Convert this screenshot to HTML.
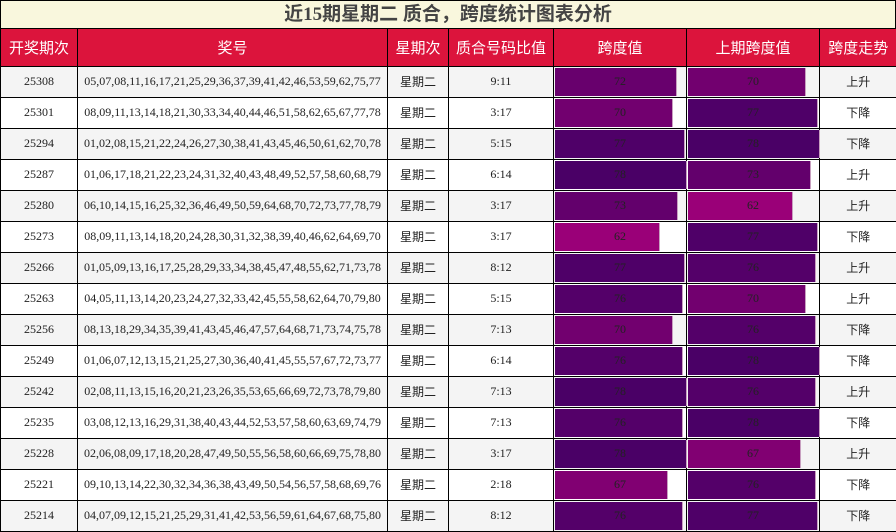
<!DOCTYPE html><html><head><meta charset="utf-8"><style>
*{margin:0;padding:0;box-sizing:border-box}
body{width:896px;height:532px;background:#fff;overflow:hidden;font-family:"Liberation Serif","Noto Sans CJK SC",serif}
.t{position:absolute;left:0;top:0;width:896px;height:30px;background:#f9f7dd;border:1px solid #000;border-bottom:2px solid #000;text-align:center;font:bold 19px/27px "Liberation Serif","Noto Sans CJK SC",sans-serif;color:#444}
table{position:absolute;left:0;top:29px;border-collapse:collapse;table-layout:fixed;width:896px}
td,th{border:1px solid #000;text-align:center;font-size:12px;color:#222;height:31px;padding:0;position:relative}
th{background:#dc143c;color:#fff;font:15px "Noto Sans CJK SC",sans-serif;height:37px;border-top:none}
tr:nth-child(even) td{background:#f4f4f4}
.c{font-family:"Noto Sans CJK SC",sans-serif;font-size:12px}
.b{position:absolute;left:1px;top:1px;bottom:1px;border-right:1px solid #c8a0c0}
td span{position:relative;color:#222}
td:last-child,th:last-child{border-right:none}
td:first-child,th:first-child{border-left:1px solid #000}
</style></head><body>
<div class="t">近15期星期二 质合，跨度统计图表分析</div>
<table>
<colgroup><col style="width:77px"><col style="width:310px"><col style="width:61px"><col style="width:105px"><col style="width:133px"><col style="width:133px"><col style="width:77px"></colgroup>
<tr><th>开奖期次</th><th>奖号</th><th>星期次</th><th>质合号码比值</th><th>跨度值</th><th>上期跨度值</th><th>跨度走势</th></tr>
<tr><td>25308</td><td>05,07,08,11,16,17,21,25,29,36,37,39,41,42,46,53,59,62,75,77</td><td class="c">星期二</td><td>9:11</td><td><div class="b" style="width:122px;background:#68006d"></div><span>72</span></td><td><div class="b" style="width:118px;background:#72006f"></div><span>70</span></td><td class="c">上升</td></tr>
<tr><td>25301</td><td>08,09,11,13,14,18,21,30,33,34,40,44,46,51,58,62,65,67,77,78</td><td class="c">星期二</td><td>3:17</td><td><div class="b" style="width:118px;background:#72006f"></div><span>70</span></td><td><div class="b" style="width:130px;background:#4f0068"></div><span>77</span></td><td class="c">下降</td></tr>
<tr><td>25294</td><td>01,02,08,15,21,22,24,26,27,30,38,41,43,45,46,50,61,62,70,78</td><td class="c">星期二</td><td>5:15</td><td><div class="b" style="width:130px;background:#4f0068"></div><span>77</span></td><td><div class="b" style="width:132px;background:#4a0066"></div><span>78</span></td><td class="c">下降</td></tr>
<tr><td>25287</td><td>01,06,17,18,21,22,23,24,31,32,40,43,48,49,52,57,58,60,68,79</td><td class="c">星期二</td><td>6:14</td><td><div class="b" style="width:132px;background:#4a0066"></div><span>78</span></td><td><div class="b" style="width:123px;background:#63006c"></div><span>73</span></td><td class="c">上升</td></tr>
<tr><td>25280</td><td>06,10,14,15,16,25,32,36,46,49,50,59,64,68,70,72,73,77,78,79</td><td class="c">星期二</td><td>3:17</td><td><div class="b" style="width:123px;background:#63006c"></div><span>73</span></td><td><div class="b" style="width:105px;background:#9a0078"></div><span>62</span></td><td class="c">上升</td></tr>
<tr><td>25273</td><td>08,09,11,13,14,18,20,24,28,30,31,32,38,39,40,46,62,64,69,70</td><td class="c">星期二</td><td>3:17</td><td><div class="b" style="width:105px;background:#9a0078"></div><span>62</span></td><td><div class="b" style="width:130px;background:#4f0068"></div><span>77</span></td><td class="c">下降</td></tr>
<tr><td>25266</td><td>01,05,09,13,16,17,25,28,29,33,34,38,45,47,48,55,62,71,73,78</td><td class="c">星期二</td><td>8:12</td><td><div class="b" style="width:130px;background:#4f0068"></div><span>77</span></td><td><div class="b" style="width:128px;background:#540069"></div><span>76</span></td><td class="c">上升</td></tr>
<tr><td>25263</td><td>04,05,11,13,14,20,23,24,27,32,33,42,45,55,58,62,64,70,79,80</td><td class="c">星期二</td><td>5:15</td><td><div class="b" style="width:128px;background:#540069"></div><span>76</span></td><td><div class="b" style="width:118px;background:#72006f"></div><span>70</span></td><td class="c">上升</td></tr>
<tr><td>25256</td><td>08,13,18,29,34,35,39,41,43,45,46,47,57,64,68,71,73,74,75,78</td><td class="c">星期二</td><td>7:13</td><td><div class="b" style="width:118px;background:#72006f"></div><span>70</span></td><td><div class="b" style="width:128px;background:#540069"></div><span>76</span></td><td class="c">下降</td></tr>
<tr><td>25249</td><td>01,06,07,12,13,15,21,25,27,30,36,40,41,45,55,57,67,72,73,77</td><td class="c">星期二</td><td>6:14</td><td><div class="b" style="width:128px;background:#540069"></div><span>76</span></td><td><div class="b" style="width:132px;background:#4a0066"></div><span>78</span></td><td class="c">下降</td></tr>
<tr><td>25242</td><td>02,08,11,13,15,16,20,21,23,26,35,53,65,66,69,72,73,78,79,80</td><td class="c">星期二</td><td>7:13</td><td><div class="b" style="width:132px;background:#4a0066"></div><span>78</span></td><td><div class="b" style="width:128px;background:#540069"></div><span>76</span></td><td class="c">上升</td></tr>
<tr><td>25235</td><td>03,08,12,13,16,29,31,38,40,43,44,52,53,57,58,60,63,69,74,79</td><td class="c">星期二</td><td>7:13</td><td><div class="b" style="width:128px;background:#540069"></div><span>76</span></td><td><div class="b" style="width:132px;background:#4a0066"></div><span>78</span></td><td class="c">下降</td></tr>
<tr><td>25228</td><td>02,06,08,09,17,18,20,28,47,49,50,55,56,58,60,66,69,75,78,80</td><td class="c">星期二</td><td>3:17</td><td><div class="b" style="width:132px;background:#4a0066"></div><span>78</span></td><td><div class="b" style="width:113px;background:#810072"></div><span>67</span></td><td class="c">上升</td></tr>
<tr><td>25221</td><td>09,10,13,14,22,30,32,34,36,38,43,49,50,54,56,57,58,68,69,76</td><td class="c">星期二</td><td>2:18</td><td><div class="b" style="width:113px;background:#810072"></div><span>67</span></td><td><div class="b" style="width:128px;background:#540069"></div><span>76</span></td><td class="c">下降</td></tr>
<tr><td>25214</td><td>04,07,09,12,15,21,25,29,31,41,42,53,56,59,61,64,67,68,75,80</td><td class="c">星期二</td><td>8:12</td><td><div class="b" style="width:128px;background:#540069"></div><span>76</span></td><td><div class="b" style="width:130px;background:#4f0068"></div><span>77</span></td><td class="c">下降</td></tr>
</table>
</body></html>
